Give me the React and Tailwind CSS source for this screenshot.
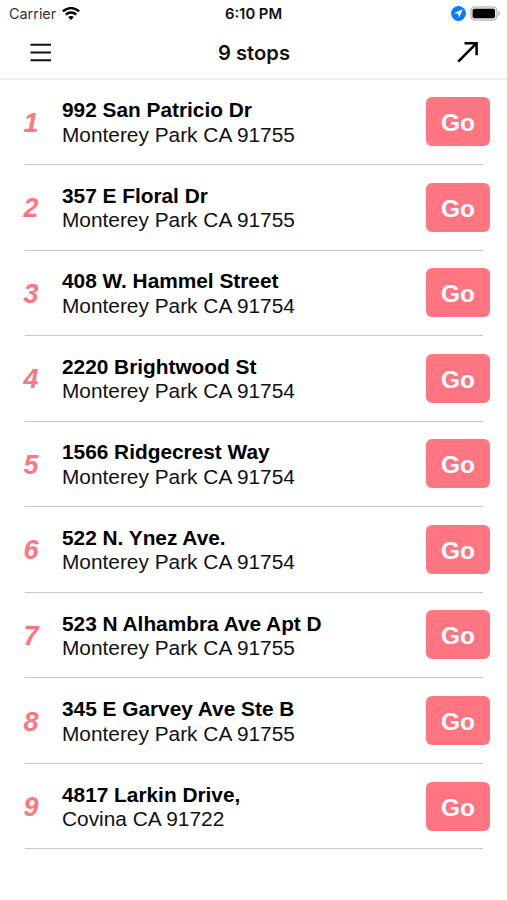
const stops = [
  ["992 San Patricio Dr", "Monterey Park CA 91755"],
  ["357 E Floral Dr", "Monterey Park CA 91755"],
  ["408 W. Hammel Street", "Monterey Park CA 91754"],
  ["2220 Brightwood St", "Monterey Park CA 91754"],
  ["1566 Ridgecrest Way", "Monterey Park CA 91754"],
  ["522 N. Ynez Ave.", "Monterey Park CA 91754"],
  ["523 N Alhambra Ave Apt D", "Monterey Park CA 91755"],
  ["345 E Garvey Ave Ste B", "Monterey Park CA 91755"],
  ["4817 Larkin Drive,", "Covina CA 91722"],
];

function WifiIcon() {
  return (
    <svg width="18" height="14" viewBox="0 0 18 14" fill="none" stroke="#000" strokeWidth="2.4">
      <path d="M0.9 4.4C5.4 0 12.6 0 17.1 4.4" />
      <path d="M3.8 7.6C6.7 4.8 11.3 4.8 14.2 7.6" />
      <path d="M9 12.9L6.1 10C7.7 8.5 10.3 8.5 11.9 10Z" fill="#000" stroke="none" />
    </svg>
  );
}

function LocationIcon() {
  return (
    <svg width="15" height="15" viewBox="0 0 15 15">
      <circle cx="7.5" cy="7.5" r="7.4" fill="#0a7aff" />
      <path d="M11.8 3.2L2.9 7.3L7.3 7.7L7.9 12.1Z" fill="#fff" />
    </svg>
  );
}

function BatteryIcon() {
  return (
    <svg width="31" height="15" viewBox="0 0 31 15">
      <rect x="0.9" y="0.9" width="26" height="13.2" rx="3.8" fill="#e8e8e8" stroke="#bdbdbd" strokeWidth="1.4" />
      <rect x="2.6" y="2.8" width="22.4" height="9.4" rx="1.8" fill="#000" />
      <path d="M28.2 5C30.7 6 30.7 9 28.2 10Z" fill="#bdbdbd" />
    </svg>
  );
}

function StatusBar() {
  return (
    <div className="grid h-[27px] grid-cols-3 items-center pl-[9px] pr-[6px]">
      <div className="flex items-center gap-[6px]">
        <span className="text-[14.4px] leading-[18px] text-[#333]">Carrier</span>
        <WifiIcon />
      </div>
      <div className="whitespace-nowrap pr-[3px] text-center text-[14.8px] font-semibold leading-[18px] text-[#111]">6:10 PM</div>
      <div className="flex items-center justify-end gap-[4px]">
        <LocationIcon />
        <BatteryIcon />
      </div>
    </div>
  );
}

function Header() {
  return (
    <header className="flex h-[53px] items-center justify-between border-b-2 border-[#f0f0f0] pl-[30px] pr-[28px]">
      <button aria-label="Menu">
        <svg width="22" height="20" viewBox="0 0 22 20" stroke="#111" strokeWidth="1.9">
          <path d="M0.5 1.8H21M0.5 9.5H21M0.5 17.2H21" />
        </svg>
      </button>
      <h1 className="pr-px text-[20.2px] font-semibold leading-6 text-[#111]">9 stops</h1>
      <button aria-label="Open route">
        <svg width="22" height="22" viewBox="0 0 22 22" fill="none" stroke="#000" strokeWidth="2.5">
          <path d="M1.2 19.6L19.6 1.2M7.5 1.3H19.6V13.3" />
        </svg>
      </button>
    </header>
  );
}

function StopRow({ number, street, city }) {
  return (
    <li className="flex h-[85.55px] shrink-0 flex-col">
      <div className="flex flex-1 items-center pl-[23.5px] pr-[17px]">
        <span className="w-[38.5px] pt-[2px] text-[27px] font-bold italic leading-8 text-[#ff7582]">{number}</span>
        <div className="flex-1 whitespace-nowrap pt-[2px] text-[20.85px] leading-[24.4px] text-[#111]">
          <p className="font-bold tracking-[-0.01px] text-black">{street}</p>
          <p>{city}</p>
        </div>
        <button className="h-[49px] w-[64px] rounded-[6px] bg-[#ff7582] pt-[3px] text-[24.5px] font-bold leading-8 text-white">Go</button>
      </div>
      <div className="ml-[25px] mr-[24px] h-px bg-[#c6c6c6]" />
    </li>
  );
}

export default function App() {
  return (
    <main className="h-[900px] w-[507px] overflow-hidden bg-white font-[Inter,sans-serif]">
      <StatusBar />
      <Header />
      <ul className="-mt-[0.6px] flex flex-col font-['Liberation_Sans',sans-serif]">
        {stops.map(([street, city], i) => (
          <StopRow key={street} number={i + 1} street={street} city={city} />
        ))}
      </ul>
    </main>
  );
}
